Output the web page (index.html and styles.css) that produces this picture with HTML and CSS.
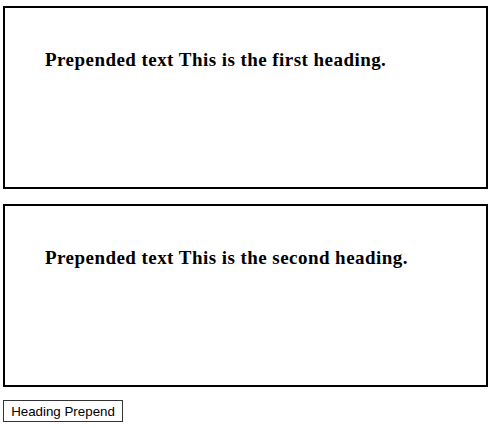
FILE: index.html
```html
<!DOCTYPE html>
<html>
<head>
<meta charset="utf-8">
<link rel="stylesheet" href="styles.css">
</head>
<body>
<div class="page">
  <div class="box"><h3 class="heading">Prepended text This is the first heading.</h3></div>
  <div class="box"><h3 class="heading">Prepended text This is the second heading.</h3></div>
  <button class="btn">Heading Prepend</button>
</div>
</body>
</html>
```

FILE: styles.css
```css
html, body { margin: 0; padding: 0; background: #fff; }
.page {
  padding: 6px 0 0 3px;
  display: flex;
  flex-direction: column;
  align-items: flex-start;
}
.box {
  box-sizing: border-box;
  width: 485px;
  height: 183px;
  border: 2px solid #000;
  margin-bottom: 15px;
  padding: 41px 0 0 40px;
}
.heading {
  margin: 0;
  font-family: "Liberation Serif", serif;
  font-weight: bold;
  font-size: 19px;
  letter-spacing: 0.45px;
  line-height: 21px;
  color: #000;
}
.btn {
  margin-top: -2px;
  box-sizing: border-box;
  width: 120px;
  height: 22px;
  padding: 0;
  border: 1px solid #333;
  background: #fff;
  font-family: "Liberation Sans", Arial, sans-serif;
  font-size: 13.33px;
  color: #000;
}
```
